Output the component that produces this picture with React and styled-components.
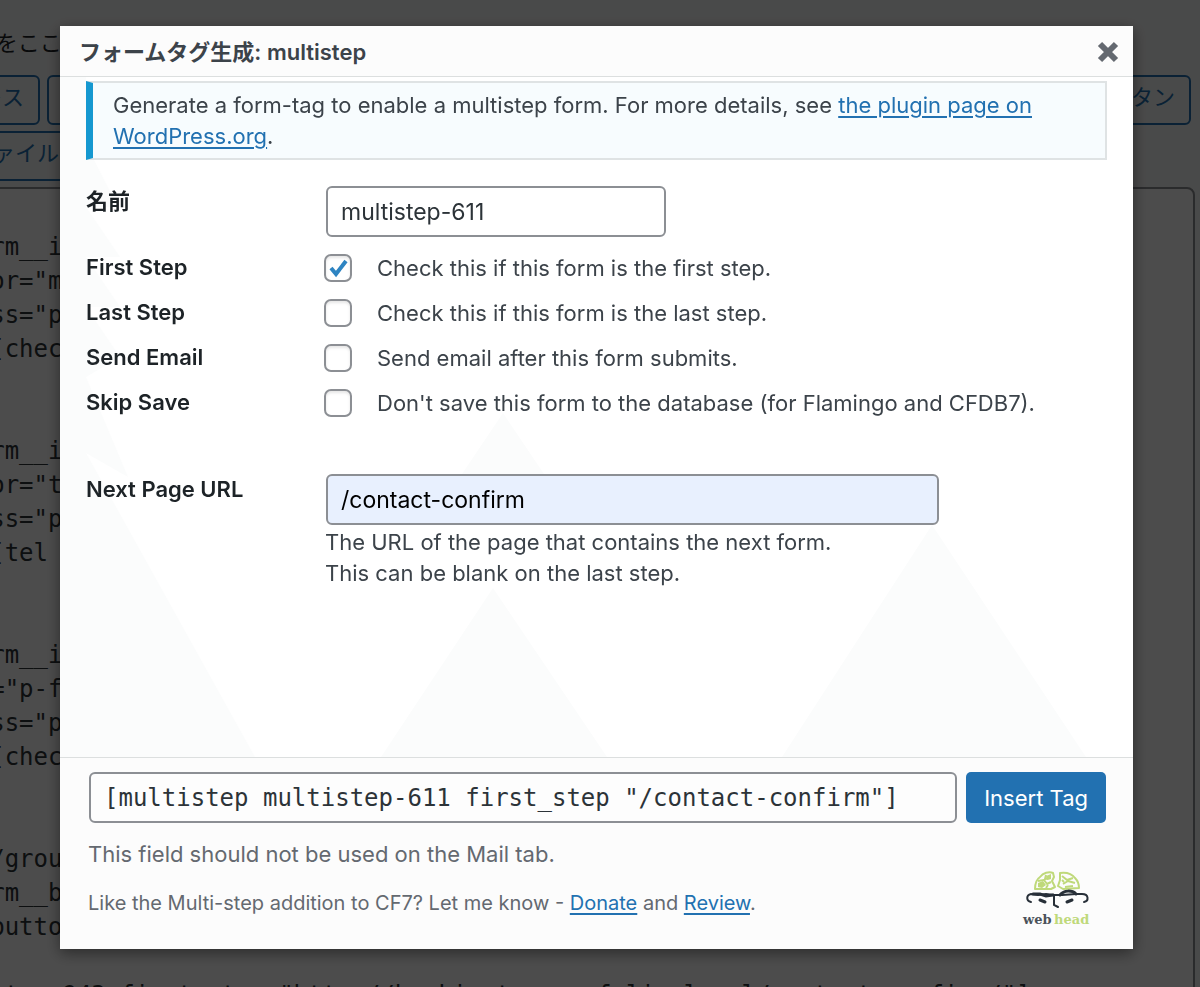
import React, { useState } from 'react'
import styled, { createGlobalStyle } from 'styled-components'

const GlobalStyle = createGlobalStyle`
    * {
        box-sizing: border-box;
    }
    body {
        margin: 0;
        background: #f6f7f7;
        color: #3c434a;
        font-family: Inter, 'Noto Sans CJK JP', sans-serif;
        font-size: 22px;
        line-height: 31px;
    }
    p {
        margin: 0;
    }
    a {
        color: #2271b1;
        text-underline-offset: 3px;
    }
    input, button, textarea {
        margin: 0;
        font-family: inherit;
        font-size: inherit;
    }
`;

const Page = styled.div`
    height: 100vh;
    overflow: hidden;
`;

const Editor = styled.div`
    display: flex;
    flex-direction: column;
    gap: 6px;
    height: 120vh;
    margin-left: -249px;
    padding: 28px 5px 0 0;
`;

const Legend = styled.p`
    margin-bottom: 10px;
    padding-left: 4px;
    color: #1d2327;
    white-space: nowrap;
`;

const TagRow = styled.div`
    display: flex;
    gap: 7px;
    padding: 0 4px 0 ${({ $indent }) => $indent}px;
`;

const TagButton = styled.button`
    flex: ${({ $grow }) => ($grow ? 1 : 'none')};
    height: 50px;
    padding: 0 14px 10px;
    border: 2px solid #2271b1;
    border-radius: 6px;
    background: #f6f7f7;
    color: #2271b1;
    text-align: left;
`;

const Source = styled.textarea`
    flex: 1;
    padding: 41px 6px;
    border: 2px solid #8c8f94;
    border-radius: 8px;
    background: #fff;
    color: #2c3338;
    font-family: 'DejaVu Sans Mono', monospace;
    font-size: 24px;
    line-height: 34px;
    white-space: pre;
    overflow: hidden;
    resize: none;
`;

const Overlay = styled.div`
    position: fixed;
    inset: 0;
    display: flex;
    padding: 26px 67px 38px 60px;
    background: rgba(0, 0, 0, 0.7);
`;

const Dialog = styled.div`
    flex: 1;
    display: flex;
    flex-direction: column;
    background: #fff;
    box-shadow: 0 4px 14px rgba(0, 0, 0, 0.45);
`;

const Header = styled.div`
    display: flex;
    justify-content: space-between;
    align-items: center;
    height: 51px;
    padding: 2px 14px 0 19px;
    border-bottom: 1px solid #dcdfdf;
    background: #fcfcfc;

    h1 {
        margin: 0;
        font-size: 22px;
        font-weight: 600;
    }
`;

const CloseButton = styled.button`
    display: flex;
    padding: 0;
    border: none;
    background: none;
    color: #646970;
`;

const Body = styled.div`
    position: relative;
    flex: 1;
    padding: 4px 26px;
`;

const Backdrop = styled.svg`
    position: absolute;
    inset: 0;
    width: 100%;
    height: 100%;
    fill: #fbfcfc;
`;

const Content = styled.div`
    position: relative;
`;

const Notice = styled.p`
    padding: 7px 20px 6px;
    border: 2px solid #dfe3e4;
    border-left: 7px solid #1598d0;
    background: #f7fcfe;
`;

const Options = styled.div`
    margin-top: 8px;
`;

const Row = styled.div`
    display: grid;
    grid-template-columns: 238px 1fr;
    margin-top: ${({ $top }) => $top || 0}px;
`;

const RowLabel = styled.label`
    color: #1d2327;
    font-weight: 600;
    line-height: ${({ $tall }) => ($tall ? 45 : 31)}px;
`;

const TextInput = styled.input`
    width: 100%;
    max-width: ${({ $width }) => $width}px;
    height: 51px;
    margin-left: 2px;
    padding: 0 13px;
    border: 2px solid #8c8f94;
    border-radius: 6px;
    background: ${({ $filled }) => ($filled ? '#e8f0fe' : '#fff')};
    color: ${({ $filled }) => ($filled ? '#000' : '#2c3338')};
    font-size: 23px;
`;

const Hint = styled.div`
    padding: 2px 0 0 1px;
`;

const CheckLine = styled.div`
    display: flex;
    align-items: center;
    gap: 25px;
    height: 45px;

    label {
        padding-top: 2px;
    }
`;

const CheckBox = styled.span`
    position: relative;
    display: flex;

    input {
        appearance: none;
        width: 28px;
        height: 28px;
        border: 2px solid #8c8f94;
        border-radius: 7px;
        background: #fff;
        box-shadow: inset 0 2px 3px rgba(0, 0, 0, 0.1);
    }
    svg {
        position: absolute;
        inset: 0;
        pointer-events: none;
    }
`;

const Footer = styled.div`
    padding: 14px 27px 20px 28px;
    border-top: 1px solid #dcdfdf;
    background: #fcfcfc;
    color: #646970;
`;

const InsertBar = styled.div`
    display: flex;
    gap: 9px;
`;

const CodeInput = styled(TextInput)`
    flex: 1;
    max-width: none;
    min-width: 0;
    margin-left: 1px;
    background: #fdfdfd;
    font-family: 'DejaVu Sans Mono', monospace;
    font-size: 24px;
`;

const InsertButton = styled.button`
    height: 51px;
    padding: 0 18px;
    border: none;
    border-radius: 5px;
    background: #2271b1;
    color: #fff;
    white-space: nowrap;
`;

const FooterNotes = styled.div`
    display: flex;
    justify-content: space-between;
    align-items: flex-end;
    padding: 16px 16px 0 0;
`;

const NoteList = styled.div`
    display: flex;
    flex-direction: column;
    gap: 18px;
    padding-bottom: 10px;
`;

const SmallNote = styled.p`
    font-size: 20px;
`;

const source = [
    '<div class="p-form__item">',
    '        <label for="menu">',
    '             class="p-form">',
    '                [checkbox]',
    '',
    '',
    '<div class="p-form__item">',
    '        <label for="tel">',
    '             class="p-form">',
    '                [tel tel]',
    '',
    '',
    '<div class="p-form__item">',
    '           class="p-form">',
    '             class="p-form">',
    '                [checkbox]',
    '',
    '',
    '               [/group]',
    '<div class="p-form__button">',
    '               <button>',
    '',
    '[multistep multistep-943 first_step "http://hookinstep-ws.folio.local/contact-confirm/"]',
].join('\n');

const options = [
    { id: 'first_step', label: 'First Step', text: 'Check this if this form is the first step.' },
    { id: 'last_step', label: 'Last Step', text: 'Check this if this form is the last step.' },
    { id: 'send_email', label: 'Send Email', text: 'Send email after this form submits.' },
    { id: 'skip_save', label: 'Skip Save', text: "Don't save this form to the database (for Flamingo and CFDB7)." },
];

const Logo = () => (
    <svg width="68" height="60" viewBox="0 0 68 60" role="img" aria-label="webhead">
        <g fill="none" stroke="#bfd97a" strokeWidth="2" strokeLinejoin="round">
            <path d="M13 20C13 14 15 10 18 8C21 4 27 2 31 4L32 8L30 12L33 18L29 20Z" />
            <path d="M38 4C45 3 50 5 53 9C56 12 57 16 57 19L41 20L36 17L38 11Z" />
            <path d="M16 12L22 11L25 15L29 13M24 6L23 10L28 9M24 19L26 16" />
            <path d="M40 7L45 11L51 9M41 15L46 12L53 14M43 18L51 17M40 11L42 13" />
        </g>
        <path d="M16 14L21 12L24 16L20 19L16 18ZM24 7L29 5L29 10L25 11Z" fill="#bfd97a" />
        <g fill="none" stroke="#272f38" strokeLinecap="round">
            <path d="M9 33C4 32 4 26 9 25L16 26L24 25L32 26L40 26L54 25L60 25C67 25 67 32 62 33" strokeWidth="2" />
            <path d="M11 25L18 25L24 27L31 26M38 26C42 21 50 21 54 25" strokeWidth="3" />
            <path d="M32 27L32 36L36 38" strokeWidth="2" />
            <path d="M18 31L23 33M45 33L50 31" strokeWidth="3" />
        </g>
        <g fontFamily="'DejaVu Serif', serif" fontSize="13" fontWeight="700">
            <text x="1" y="55" fill="#4b525a">web</text>
            <text x="32" y="55" fill="#bfd97a">head</text>
        </g>
    </svg>
)

const OptionRow = ({ option, checked, onToggle }) => (
    <Row>
        <RowLabel htmlFor={option.id} $tall>{option.label}</RowLabel>
        <CheckLine>
            <CheckBox>
                <input id={option.id} type="checkbox" checked={checked} onChange={onToggle} />
                {checked && (
                    <svg width="28" height="28" viewBox="0 0 28 28">
                        <path d="M7 14L12 20L22 7" fill="none" stroke="#2e84c2" strokeWidth="4" />
                    </svg>
                )}
            </CheckBox>
            <label htmlFor={option.id}>{option.text}</label>
        </CheckLine>
    </Row>
)

const App = () => {
    const [name, setName] = useState('multistep-611');
    const [url, setUrl] = useState('/contact-confirm');
    const [checked, setChecked] = useState({ first_step: true });

    const toggle = (id) => setChecked({ ...checked, [id]: !checked[id] });

    const flags = options.filter(({ id }) => checked[id]).map(({ id }) => ` ${id}`).join('');
    const tag = `[multistep ${name}${flags} "${url}"]`;

    return (
        <Page>
            <GlobalStyle />
            <Editor>
                <Legend>フォームのテンプレートをここ</Legend>
                <TagRow $indent={103}>
                    <TagButton>メールアドレス</TagButton>
                    <TagButton $grow aria-label="URL" />
                    <TagButton>送信ボタン</TagButton>
                </TagRow>
                <TagRow $indent={204}>
                    <TagButton>ファイル</TagButton>
                </TagRow>
                <Source aria-label="Form" defaultValue={source} spellCheck={false} />
            </Editor>
            <Overlay>
                <Dialog role="dialog" aria-labelledby="dialog-title">
                    <Header>
                        <h1 id="dialog-title">フォームタグ生成: multistep</h1>
                        <CloseButton aria-label="Close">
                            <svg width="22" height="22" viewBox="0 0 22 22">
                                <path d="M3 3L19 19M19 3L3 19" stroke="currentColor" strokeWidth="6" />
                            </svg>
                        </CloseButton>
                    </Header>
                    <Body>
                        <Backdrop viewBox="0 0 1073 680" preserveAspectRatio="none" aria-hidden="true">
                            <path d="M0 0H26L34 83L58 130L26 130L60 180L26 180L60 230L26 230L60 280L26 300L68 400L26 376L195 680H0Z" />
                            <path d="M443 336L484 397H402Z" />
                            <path d="M433 511L547 680H321Z" />
                            <path d="M872 448L1026 680H722Z" />
                        </Backdrop>
                        <Content>
                            <Notice>
                                Generate a form-tag to enable a multistep form. For more details, see{' '}
                                <a href="#plugin">the plugin page on WordPress.org</a>.
                            </Notice>
                            <Row $top={26}>
                                <RowLabel htmlFor="name">名前</RowLabel>
                                <TextInput id="name" $width={340} value={name} onChange={(e) => setName(e.target.value)} />
                            </Row>
                            <Options>
                                {options.map((option) => (
                                    <OptionRow
                                        key={option.id}
                                        option={option}
                                        checked={!!checked[option.id]}
                                        onToggle={() => toggle(option.id)}
                                    />
                                ))}
                            </Options>
                            <Row $top={49}>
                                <RowLabel htmlFor="next-url">Next Page URL</RowLabel>
                                <div>
                                    <TextInput id="next-url" $width={613} $filled value={url} onChange={(e) => setUrl(e.target.value)} />
                                    <Hint>
                                        <p>The URL of the page that contains the next form.</p>
                                        <p>This can be blank on the last step.</p>
                                    </Hint>
                                </div>
                            </Row>
                        </Content>
                    </Body>
                    <Footer>
                        <InsertBar>
                            <CodeInput aria-label="Form tag" readOnly value={tag} />
                            <InsertButton>Insert Tag</InsertButton>
                        </InsertBar>
                        <FooterNotes>
                            <NoteList>
                                <p>This field should not be used on the Mail tab.</p>
                                <SmallNote>
                                    Like the Multi-step addition to CF7? Let me know - <a href="#donate">Donate</a> and{' '}
                                    <a href="#review">Review</a>.
                                </SmallNote>
                            </NoteList>
                            <Logo />
                        </FooterNotes>
                    </Footer>
                </Dialog>
            </Overlay>
        </Page>
    )
}

export default App;
